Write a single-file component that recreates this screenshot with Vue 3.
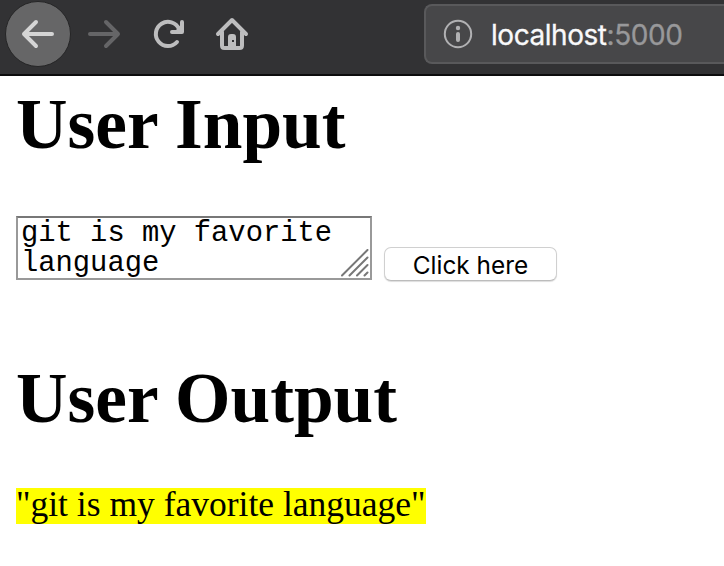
<script setup>
import { ref } from 'vue'

const input = ref('git is my favorite language')
const output = ref('git is my favorite language')

function submit() {
  output.value = input.value
}
</script>

<template>
  <div class="window">
    <header class="toolbar">
      <nav class="nav">
        <button class="back" aria-label="Back">
          <svg width="64" height="64" viewBox="0 0 64 64">
            <path d="M46 32H18M30 20L18 32l12 12" />
          </svg>
        </button>
        <svg class="forward" width="36" height="32" viewBox="0 0 36 32">
          <path d="M4 16H32M20 4L32 16 20 28" />
        </svg>
        <svg class="reload" width="36" height="36" viewBox="0 0 36 36">
          <path d="M28 13A12.100 12.100 0 1 0 26 26" />
          <path d="M31 6V16H21" />
          <path class="fill" d="M31 8V16H23z" />
        </svg>
        <svg class="home" width="36" height="36" viewBox="0 0 36 36">
          <path d="M4 18L18 4l14 14" />
          <path d="M8 16V29.500Q8 32 10.500 32H25.500Q28 32 28 29.500V16" />
          <path class="fill" fill-rule="evenodd" d="M14 32V21q0-3 3-3h2q3 0 3 3v11zM18 24v2h2v-2z" />
        </svg>
      </nav>
      <div class="address">
        <svg class="info" width="30" height="30" viewBox="0 0 30 30">
          <circle cx="15" cy="15" r="13.200" />
          <circle class="dot" cx="15" cy="9" r="2.200" />
          <path d="M15 15v6" />
        </svg>
        <span class="url">localhost<span class="port">:5000</span></span>
      </div>
    </header>

    <main class="page">
      <h1>User Input</h1>
      <div class="form">
        <div class="field">
          <textarea v-model="input" rows="2" spellcheck="false"></textarea>
          <svg class="grip" width="28" height="28" viewBox="0 0 28 28">
            <path d="M1 26.500L26.500 1M8.500 26.500L26.500 8.500M16 26.500L26.500 16M23.500 26.500l3-3" />
          </svg>
        </div>
        <button class="submit" @click="submit">Click here</button>
      </div>
      <h1>User Output</h1>
      <p><mark>"{{ output }}"</mark></p>
    </main>
  </div>
</template>

<style>
body {
  margin: 0;
  background: #fff;
}
</style>

<style scoped>
.window {
  height: 566px;
  overflow: hidden;
}
.toolbar {
  box-sizing: border-box;
  height: 76px;
  display: flex;
  align-items: flex-start;
  background: #323234;
  border-bottom: 2px solid #0c0c0d;
}
.nav {
  width: 424px;
  flex: none;
  height: 68px;
  display: flex;
  align-items: center;
}
.nav svg {
  flex: none;
  fill: none;
  stroke: #bdbdbe;
  stroke-width: 4;
  stroke-linecap: round;
  stroke-linejoin: round;
}
.back {
  box-sizing: border-box;
  width: 66px;
  height: 66px;
  margin-left: 5px;
  padding: 0;
  border: 1px solid #252526;
  border-radius: 50%;
  background: #666667;
  display: flex;
  align-items: center;
  justify-content: center;
}
.nav .back svg {
  stroke: #d5d5d5;
}
.nav .forward {
  margin-left: 15px;
  stroke: #656567;
}
.reload {
  margin-left: 29px;
}
.home {
  margin-left: 27px;
}
.nav .fill {
  fill: #bdbdbe;
  stroke: none;
}
.address {
  box-sizing: border-box;
  flex: 1;
  height: 60px;
  margin-top: 4px;
  padding-left: 17px;
  display: flex;
  align-items: center;
  background: #474749;
  border: 2px solid #59595b;
  border-right: 0;
  border-radius: 8px 0 0 8px;
}
.info {
  flex: none;
  fill: none;
  stroke: #b1b1b3;
  stroke-width: 2;
  stroke-linecap: round;
}
.info path {
  stroke-width: 4;
}
.info .dot {
  fill: #b1b1b3;
  stroke: none;
}
.url {
  margin: 2px 0 0 18px;
  font: 28px/36px Inter, "Liberation Sans", sans-serif;
  letter-spacing: -0.45px;
  color: #f9f9fa;
  -webkit-text-stroke: 0.3px;
  white-space: nowrap;
}
.port {
  color: #98989a;
}
.page {
  padding: 8px 16px 0;
  color: #000;
  font-family: "Liberation Serif", "Times New Roman", serif;
}
h1 {
  margin: 0;
  font-size: 71.300px;
  line-height: 80px;
  font-weight: bold;
}
.form {
  display: flex;
  align-items: flex-end;
  gap: 12px;
  height: 66px;
  margin: 52px 0 76px;
}
.field {
  position: relative;
  width: 356px;
  height: 64px;
  margin-bottom: 2px;
}
textarea {
  box-sizing: border-box;
  display: block;
  width: 356px;
  height: 64px;
  margin: 0;
  padding: 1px 3px 0;
  border: 2px solid #999;
  border-top-color: #777;
  border-radius: 0;
  outline: 0;
  resize: none;
  overflow: hidden;
  background: #fff;
  color: #000;
  font: 28.800px/30px "Liberation Mono", "Courier New", monospace;
}
.grip {
  position: absolute;
  right: 3px;
  bottom: 3px;
  fill: none;
  stroke: #777;
  stroke-width: 2;
  stroke-linecap: round;
}
.submit {
  box-sizing: border-box;
  width: 173px;
  height: 34px;
  margin-bottom: 1px;
  padding: 1px 0 0;
  border: 1px solid #d0d0d0;
  border-bottom-color: #bcbcbc;
  border-radius: 7px;
  background: #fff;
  box-shadow: 0 1px 1px #ddd;
  color: #000;
  font: 24.400px/30px Inter, "Liberation Sans", sans-serif;
  white-space: nowrap;
}
p {
  margin: 50px 0 0;
  font-size: 35.500px;
}
mark {
  display: block;
  width: fit-content;
  height: 36px;
  line-height: 32px;
  background: #ff0;
  color: #000;
  white-space: nowrap;
}
</style>
